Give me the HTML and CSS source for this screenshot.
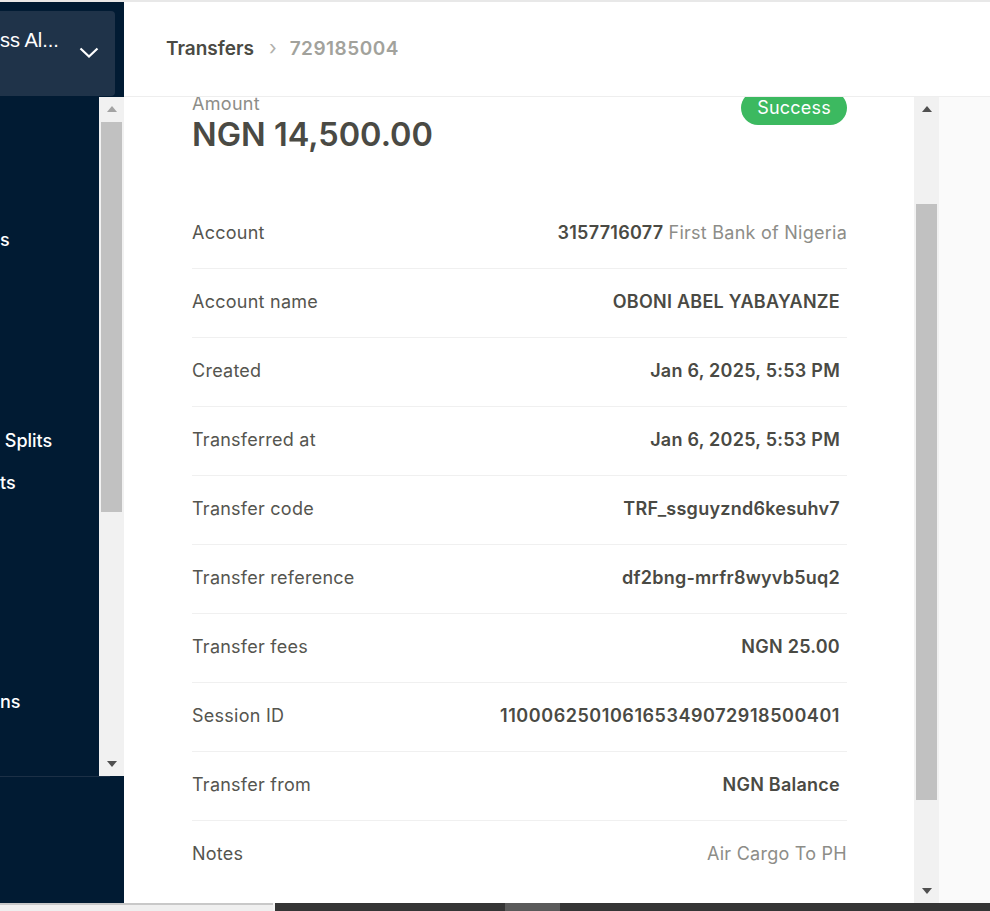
FILE: index.html
```html
<!DOCTYPE html>
<html>
<head>
<meta charset="utf-8">
<link rel="stylesheet" href="styles.css">
</head>
<body>
<div class="topline"></div>
<div class="app">
  <aside class="sidebar">
    <div class="biz">
      <span class="biz-name">ss Al...</span>
      <svg class="chev" width="20" height="12" viewBox="0 0 20 12"><path d="M1.5 1.5 L10 9.5 L18.5 1.5" fill="none" stroke="#fff" stroke-width="2.2"/></svg>
    </div>
    <div class="side-scroll">
      <nav class="side-nav">
        <div class="nav-item first">s</div>
        <div class="nav-item gap1"> Splits</div>
        <div class="nav-item">ts</div>
        <div class="nav-item gap2">ns</div>
      </nav>
      <div class="vscroll">
        <div class="sbtn"><span class="tri-up dim"></span></div>
        <div class="thumb" style="margin-top:1px;height:390px"></div>
        <div class="sfill"></div>
        <div class="sbtn"><span class="tri-down"></span></div>
      </div>
    </div>
    <div class="side-foot"></div>
  </aside>
  <main class="main">
    <header class="crumbs">
      <span class="crumb-link">Transfers</span>
      <span class="crumb-sep">›</span>
      <span class="crumb-current">729185004</span>
    </header>
    <div class="body">
      <div class="panel">
        <div class="panel-content">
          <div class="amount-block">
            <div class="amount-left">
              <div class="amount-label">Amount</div>
              <div class="amount-value">NGN 14,500.00</div>
            </div>
            <span class="badge">Success</span>
          </div>
          <div class="row"><span class="lbl">Account</span><span class="val-wide"><b class="strong">3157716077</b> <span class="muted">First Bank of Nigeria</span></span></div>
          <div class="row"><span class="lbl">Account name</span><span class="val">OBONI ABEL YABAYANZE</span></div>
          <div class="row"><span class="lbl">Created</span><span class="val">Jan 6, 2025, 5:53 PM</span></div>
          <div class="row"><span class="lbl">Transferred at</span><span class="val">Jan 6, 2025, 5:53 PM</span></div>
          <div class="row"><span class="lbl">Transfer code</span><span class="val">TRF_ssguyznd6kesuhv7</span></div>
          <div class="row"><span class="lbl">Transfer reference</span><span class="val">df2bng-mrfr8wyvb5uq2</span></div>
          <div class="row"><span class="lbl">Transfer fees</span><span class="val">NGN 25.00</span></div>
          <div class="row"><span class="lbl">Session ID</span><span class="val digits">110006250106165349072918500401</span></div>
          <div class="row"><span class="lbl">Transfer from</span><span class="val">NGN Balance</span></div>
          <div class="row last"><span class="lbl">Notes</span><span class="muted">Air Cargo To PH</span></div>
        </div>
      </div>
      <div class="vscroll">
        <div class="sbtn"><span class="tri-up"></span></div>
        <div class="thumb" style="margin-top:83px;height:596px"></div>
        <div class="sfill"></div>
        <div class="sbtn"><span class="tri-down"></span></div>
      </div>
      <div class="gutter"></div>
    </div>
  </main>
</div>
<div class="bottombar">
  <div class="bb-light"></div>
  <div class="bb-gap"></div>
  <div class="bb-dark"><div class="bb-thumb"></div></div>
</div>
</body>
</html>
```

FILE: styles.css
```css
* { box-sizing: border-box; }
html, body { margin: 0; padding: 0; }
body {
  width: 990px;
  height: 911px;
  overflow: hidden;
  font-family: Inter, "Liberation Sans", sans-serif;
  background: #fff;
  color: #4a4a44;
}
.topline { height: 2px; background: #e8e8e8; }
.app { display: flex; height: 901px; }

/* sidebar */
.sidebar {
  width: 124px;
  flex: none;
  background: #011b33;
  display: flex;
  flex-direction: column;
}
.biz {
  margin-top: 9px;
  width: 115px;
  height: 85px;
  background: #1f3349;
  border-radius: 0 4px 4px 0;
  display: flex;
  align-items: flex-start;
  justify-content: space-between;
  padding: 17px 16px 0 0;
}
.biz-name {
  color: #fff;
  font-family: "Liberation Sans", Arial, sans-serif;
  font-size: 20px;
  line-height: 24px;
  white-space: nowrap;
}
.chev { margin-top: 19px; }
.side-scroll {
  margin-top: 1px;
  height: 679px;
  display: flex;
}
.side-nav {
  width: 99px;
  display: flex;
  flex-direction: column;
  color: #fff;
  font-size: 18px;
  font-weight: 500;
  overflow: hidden;
}
.nav-item { height: 42px; line-height: 42px; white-space: pre; }
.nav-item.first { margin-top: 122px; }
.nav-item.gap1 { margin-top: 159px; }
.nav-item.gap2 { margin-top: 177px; }

.vscroll {
  width: 25px;
  flex: none;
  background: #f1f1f1;
  display: flex;
  flex-direction: column;
}
.sbtn {
  height: 24px;
  flex: none;
  display: flex;
  align-items: center;
  justify-content: center;
}
.sfill { flex: 1; }
.thumb { margin-left: 2px; margin-right: 2px; background: #c1c1c1; flex: none; }
.tri-up, .tri-down { width: 0; height: 0; border-left: 5.5px solid transparent; border-right: 5.5px solid transparent; }
.tri-up { border-bottom: 6px solid #505050; }
.tri-up.dim { border-bottom-color: #a3a3a3; }
.tri-down { border-top: 6px solid #505050; }
.side-foot {
  flex: 1;
  border-top: 1px solid #1c3046;
  margin-right: 14px;
}

/* main */
.main { flex: 1; display: flex; flex-direction: column; min-width: 0; }
.crumbs {
  height: 95px;
  flex: none;
  border-bottom: 1px solid #eeeeee;
  display: flex;
  align-items: center;
  padding: 0 0 2px 42px;
  font-size: 19px;
  font-weight: 600;
}
.crumb-link { color: #4a4a44; }
.crumb-sep { color: #b0b0ac; font-weight: 400; margin: 0 13px 0 15px; font-size: 20px; }
.crumb-current { color: #a2a29c; letter-spacing: 0.5px; }

.body { flex: 1; display: flex; min-height: 0; }
.panel { width: 790px; flex: none; overflow: hidden; background: #fff; }
.panel-content { margin-top: -6px; padding: 0 67px 0 68px; }
.gutter { flex: 1; background: #fafafa; }

.amount-block {
  display: flex;
  justify-content: space-between;
  align-items: flex-start;
  margin-bottom: 46px;
}
.amount-label {
  margin-top: 6px;
  font-size: 18px;
  line-height: 14px;
  letter-spacing: 0.3px;
  color: #8d8d88;
}
.amount-value {
  margin-top: 5px;
  font-size: 32.5px;
  line-height: 38px;
  font-weight: 600;
  color: #4a4a44;
}
.badge {
  height: 34px;
  width: 106px;
  border-radius: 17px;
  background: #3cb960;
  color: #fff;
  font-size: 18px;
  letter-spacing: 0.2px;
  line-height: 34px;
  text-align: center;
}

.row {
  display: flex;
  justify-content: space-between;
  align-items: center;
  padding: 21px 0 23px;
  line-height: 24px;
  font-size: 18px;
  letter-spacing: 0.25px;
  border-bottom: 1px solid #f0f0f0;
}
.row.last { border-bottom: none; }
.lbl { color: #55554f; }
.val { font-weight: 600; color: #4a4a44; margin-right: 7px; }
.val.digits { letter-spacing: 0.55px; }
.strong { font-weight: 600; color: #4a4a44; }
.muted { color: #8d8d88; }

/* bottom bar */
.bottombar { height: 8px; display: flex; }
.bb-light { width: 273px; background: #efefef; border-top: 2px solid #c8c8c8; }
.bb-gap { width: 2px; background: #f4f4f4; }
.bb-dark { flex: 1; background: #353535; display: flex; }
.bb-thumb { margin-left: 230px; width: 55px; background: #5a5a5a; }
```
